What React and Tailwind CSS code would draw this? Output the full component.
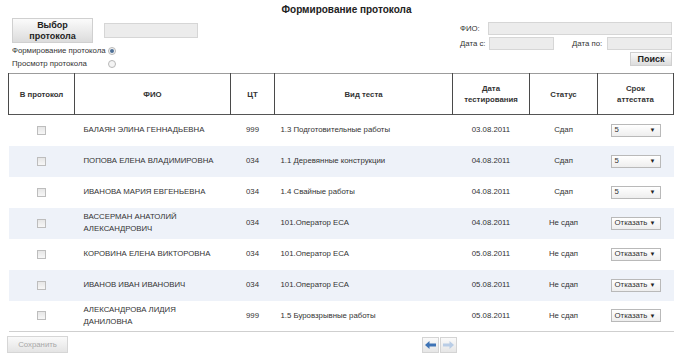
import { useState } from 'react'

const rows = [
  { fio: ['БАЛАЯН ЭЛИНА ГЕННАДЬЕВНА'], ct: '999', test: '1.3 Подготовительные работы', date: '03.08.2011', status: 'Сдап', term: '5' },
  { fio: ['ПОПОВА ЕЛЕНА ВЛАДИМИРОВНА'], ct: '034', test: '1.1 Деревянные конструкции', date: '04.08.2011', status: 'Сдап', term: '5' },
  { fio: ['ИВАНОВА МАРИЯ ЕВГЕНЬЕВНА'], ct: '034', test: '1.4 Свайные работы', date: '04.08.2011', status: 'Сдап', term: '5' },
  { fio: ['ВАССЕРМАН АНАТОЛИЙ', 'АЛЕКСАНДРОВИЧ'], ct: '034', test: '101.Оператор ЕСА', date: '04.08.2011', status: 'Не сдап', term: 'Отказать' },
  { fio: ['КОРОВИНА ЕЛЕНА ВИКТОРОВНА'], ct: '034', test: '101.Оператор ЕСА', date: '05.08.2011', status: 'Не сдап', term: 'Отказать' },
  { fio: ['ИВАНОВ ИВАН ИВАНОВИЧ'], ct: '034', test: '101.Оператор ЕСА', date: '05.08.2011', status: 'Не сдап', term: 'Отказать' },
  { fio: ['АЛЕКСАНДРОВА ЛИДИЯ', 'ДАНИЛОВНА'], ct: '999', test: '1.5 Буровзрывные работы', date: '05.08.2011', status: 'Не сдап', term: 'Отказать' },
]

const headers = [['В протокол'], ['ФИО'], ['ЦТ'], ['Вид теста'], ['Дата', 'тестирования'], ['Статус'], ['Срок', 'аттестата']]

const Radio = ({ checked }) => (
  <span className="w-[8px] h-[8px] rounded-full border border-[#b8b8b8] bg-[#f4f4f4] flex items-center justify-center">
    {checked && <span className="w-[4px] h-[4px] rounded-full bg-[#4d6f96]" />}
  </span>
)

const Arrow = ({ dir, faded }) => (
  <div className="w-[17px] h-[16px] border border-[#d4d4d4] bg-gradient-to-b from-[#fafafa] to-[#e6e6e6] flex items-center justify-center">
    <svg width="11" height="8" viewBox="0 0 11 8" className={dir === 'right' ? 'rotate-180' : ''}>
      <path d="M0 4 L4.5 0 L4.5 2.5 L11 2.5 L11 5.5 L4.5 5.5 L4.5 8 Z" fill={faded ? '#b9cde6' : '#3f74b6'} />
    </svg>
  </div>
)

const FakeSelect = ({ value }) => (
  <div className="mx-auto w-[50px] h-[13px] border border-[#b9b9b9] bg-gradient-to-b from-white to-[#eeeeee] flex items-center justify-between pl-[3px] pr-[4px] text-[7.8px] leading-none text-[#333]">
    <span>{value}</span>
    <span className="text-[6px] text-[#222]">▼</span>
  </div>
)

const App = () => {
  const [mode, setMode] = useState('form')

  return (
    <div className="w-[681px] h-[357px] bg-white text-[#333] overflow-hidden font-['Liberation_Sans',Arial,sans-serif] text-[7.8px]">
      <div className="h-[18px] pt-[4px] text-center text-[10px] font-bold leading-[12px] text-[#222] pl-[12px]">
        Формирование протокола
      </div>

      <div className="flex justify-between h-[55px]">
        <div className="pl-[12px]">
          <div className="flex items-center gap-[11px]">
            <button className="w-[81px] h-[25px] border border-[#d0d0d0] bg-gradient-to-b from-[#fbfbfb] to-[#dcdcdc] text-[9px] font-bold leading-[11px] text-[#222]">
              Выбор<br />протокола
            </button>
            <div className="w-[94px] h-[15px] border border-[#d6d6d6] bg-[#ececec]" />
          </div>
          <div className="mt-[1px]">
            <label className="flex items-center h-[13px]" onClick={() => setMode('form')}>
              <span className="w-[96px] whitespace-nowrap">Формирование протокола</span>
              <Radio checked={mode === 'form'} />
            </label>
            <label className="flex items-center h-[13px]" onClick={() => setMode('view')}>
              <span className="w-[96px] whitespace-nowrap">Просмотр протокола</span>
              <Radio checked={mode === 'view'} />
            </label>
          </div>
        </div>

        <div className="w-[222px] pr-[9px] pt-[4px] flex flex-col gap-[2px]">
          <div className="flex items-center h-[13px]">
            <span className="w-[29px] pl-[1px] whitespace-nowrap">ФИО:</span>
            <div className="flex-1 h-[13px] border border-[#d6d6d6] bg-[#ececec]" />
          </div>
          <div className="flex items-center h-[13px]">
            <span className="w-[30px] pl-[1px] whitespace-nowrap">Дата с:</span>
            <div className="w-[65px] h-[13px] border border-[#d6d6d6] bg-[#ececec]" />
            <span className="ml-[18px] w-[35px] whitespace-nowrap">Дата по:</span>
            <div className="flex-1 h-[13px] border border-[#d6d6d6] bg-[#ececec]" />
          </div>
          <div className="flex justify-end">
            <button className="w-[42px] h-[14px] border border-[#d0d0d0] bg-gradient-to-b from-[#fbfbfb] to-[#dcdcdc] text-[9px] font-bold leading-none text-[#222]">
              Поиск
            </button>
          </div>
        </div>
      </div>

      <div className="pl-[8px]">
        <table className="w-[665px] table-fixed border-collapse">
          <colgroup>
            <col className="w-[66px]" />
            <col className="w-[156px]" />
            <col className="w-[44px]" />
            <col className="w-[178px]" />
            <col className="w-[77px]" />
            <col className="w-[68px]" />
            <col className="w-[76px]" />
          </colgroup>
          <thead>
            <tr className="h-[41px] border-t border-t-[#9c9c9c] border-b border-b-[#555]">
              {headers.map(h => (
                <th key={h[0]} className="border-x border-x-[#4a4a4a] px-[4px] font-bold text-[7.8px] leading-[11px] text-[#333] text-center whitespace-nowrap">
                  {h.map(line => <div key={line}>{line}</div>)}
                </th>
              ))}
            </tr>
          </thead>
          <tbody>
            {rows.map((r, i) => (
              <tr key={r.fio[0]} className={`h-[31px] ${i % 2 === 1 ? 'bg-[#eef2f9]' : 'bg-white'} ${i === rows.length - 1 ? 'border-b border-b-[#cfcfcf]' : ''}`}>
                <td className="text-center">
                  <span className="inline-block align-middle w-[9px] h-[9px] border border-[#bdbdbd] bg-gradient-to-b from-[#e6e6e6] to-[#f7f7f7]" />
                </td>
                <td className="pl-[9px] leading-[12px] whitespace-nowrap">
                  {r.fio.map(line => <div key={line}>{line}</div>)}
                </td>
                <td className="text-center">{r.ct}</td>
                <td className="pl-[6px] whitespace-nowrap">{r.test}</td>
                <td className="text-center">{r.date}</td>
                <td className="text-center">{r.status}</td>
                <td><FakeSelect value={r.term} /></td>
              </tr>
            ))}
          </tbody>
        </table>
      </div>

      <div className="flex items-center mt-[4px] pl-[7px]">
        <button className="w-[61px] h-[17px] border border-[#d6d6d6] bg-gradient-to-b from-[#fafafa] to-[#e4e4e4] text-[7.8px] text-[#a8a8a8]">
          Сохранить
        </button>
        <div className="ml-[354px] flex gap-[1px]">
          <Arrow dir="left" />
          <Arrow dir="right" faded />
        </div>
      </div>
    </div>
  )
}

export default App
